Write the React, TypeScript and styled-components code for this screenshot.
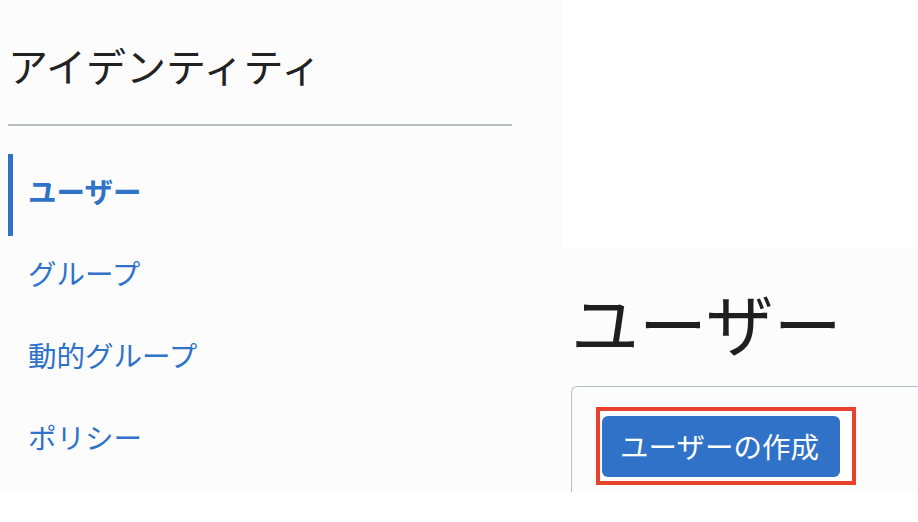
import React from "react";
import styled, { createGlobalStyle } from "styled-components";

const Global = createGlobalStyle`
  html, body { margin: 0; padding: 0; background: #ffffff; }
  body { font-family: "Noto Sans CJK JP", "Noto Sans", sans-serif; }
  * { box-sizing: border-box; }
`;

const Page = styled.div`
  display: grid;
  grid-template-columns: 563px 1fr;
  width: 918px;
  height: 492px;
`;

const Sidebar = styled.aside`
  background: #fcfcfc;
  padding: 0 51px 0 8px;
  display: flex;
  flex-direction: column;
`;

const SideTitle = styled.h2`
  margin: 0;
  padding-top: 42px;
  height: 124px;
  font-size: 40px;
  line-height: 46px;
  font-weight: 400;
  color: #222222;
  letter-spacing: 0;
`;

const Divider = styled.hr`
  margin: 0;
  border: 0;
  height: 2px;
  background: #b9bcc1;
`;

const NavList = styled.nav`
  display: flex;
  flex-direction: column;
  padding-top: 28px;
`;

const NavItem = styled.a<{ $active?: boolean }>`
  display: flex;
  align-items: center;
  height: 82px;
  padding-left: ${(p) => (p.$active ? "15px" : "20px")};
  border-left: ${(p) => (p.$active ? "5px solid #2f72c8" : "none")};
  color: #2f72c8;
  font-size: 28.5px;
  font-weight: ${(p) => (p.$active ? 700 : 400)};
  text-decoration: none;
  line-height: 1;
  padding-bottom: 7px;
`;

const Main = styled.main`
  display: grid;
  grid-template-rows: 248px 1fr;
  overflow: hidden;
`;

const Blank = styled.div`
  background: #ffffff;
`;

const Content = styled.section`
  background: #fcfcfc;
  overflow: hidden;
  display: flex;
  flex-direction: column;
`;

const Heading = styled.h1`
  margin: 0;
  padding: 36px 0 0 8px;
  height: 138px;
  font-size: 68px;
  line-height: 76px;
  font-weight: 400;
  color: #1f1f1f;
`;

const Card = styled.div`
  margin-left: 8px;
  flex: 1;
  border: 1.5px solid #b8bdc3;
  border-right: none;
  border-bottom: none;
  border-top-left-radius: 6px;
  padding: 20px 0 0 24px;
`;

const Highlight = styled.div`
  display: inline-flex;
  border: 4px solid #e8412c;
  padding: 5px 12px 4px 2px;
  background: #ffffff;
`;

const PrimaryButton = styled.button`
  height: 61px;
  padding: 0 21px 2px 18px;
  border: 0;
  border-radius: 6px;
  background: #2f72c8;
  color: #ffffff;
  font-family: "Noto Sans CJK JP", "Noto Sans", sans-serif;
  font-size: 28.5px;
  font-weight: 400;
  cursor: pointer;
`;

const navItems = [
  { label: "ユーザー", active: true },
  { label: "グループ" },
  { label: "動的グループ" },
  { label: "ポリシー" },
];

export default function App() {
  return (
    <>
      <Global />
      <Page>
        <Sidebar>
          <SideTitle>アイデンティティ</SideTitle>
          <Divider />
          <NavList>
            {navItems.map((n) => (
              <NavItem key={n.label} $active={n.active} href="#">
                {n.label}
              </NavItem>
            ))}
          </NavList>
        </Sidebar>
        <Main>
          <Blank />
          <Content>
            <Heading>ユーザー</Heading>
            <Card>
              <Highlight>
                <PrimaryButton>ユーザーの作成</PrimaryButton>
              </Highlight>
            </Card>
          </Content>
        </Main>
      </Page>
    </>
  );
}
